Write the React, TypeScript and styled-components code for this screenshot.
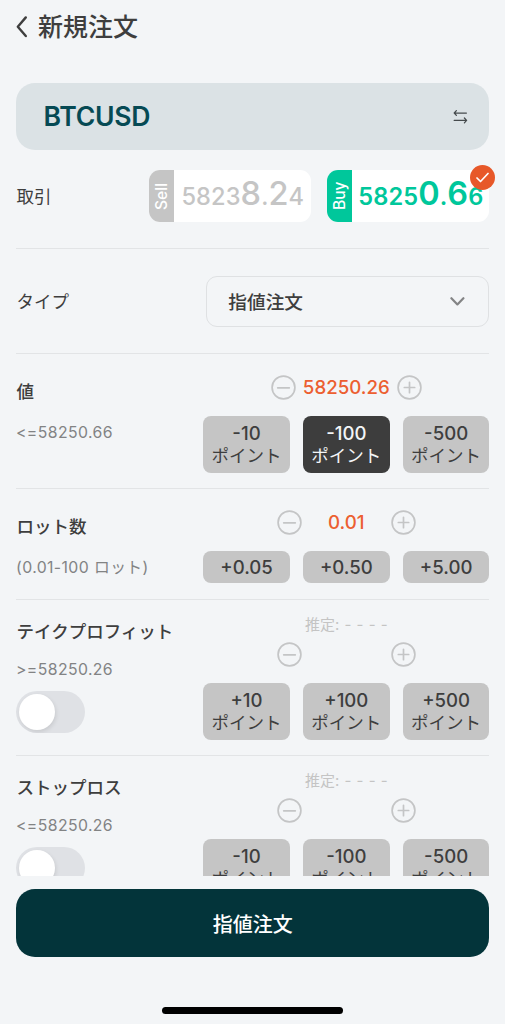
import React from "react";
import styled, { createGlobalStyle } from "styled-components";

const GlobalStyle = createGlobalStyle`
  * { box-sizing: border-box; }
  body {
    margin: 0;
    background: #f3f5f7;
    color: #3e3e3e;
    font-family: Inter, "Noto Sans CJK JP", sans-serif;
    font-weight: 500;
  }
  button { font: inherit; color: inherit; border: 0; padding: 0; background: none; }
`;

const Screen = styled.main`
  width: 505px;
  height: 1024px;
  padding: 0 15.7px 0 16px;
  display: flex;
  flex-direction: column;
  overflow: hidden;
`;

const Header = styled.header`
  height: 83px;
  flex: none;
  display: flex;
  align-items: flex-start;
  padding-top: 12px;
`;

const BackButton = styled.button`
  width: 22px;
  height: 29px;
  display: flex;
  align-items: center;
`;

const Title = styled.h1`
  margin: 0;
  font-size: 25px;
  line-height: 31px;
  font-weight: 500;
`;

const SymbolBar = styled.div`
  height: 67px;
  flex: none;
  display: flex;
  align-items: center;
  justify-content: space-between;
  padding: 0 21px 0 27.5px;
  border-radius: 19px;
  background: #dbe2e5;
`;

const SymbolName = styled.span`
  color: #064a54;
  font-size: 26.6px;
  line-height: 32px;
  padding-bottom: 1px;
  font-weight: 600;
  letter-spacing: -0.3px;
`;

const ScrollArea = styled.div`
  height: 726px;
  flex: none;
  overflow: hidden;
  margin-right: -8px;
  padding-right: 8px;
`;

const Row = styled.section<{ $height: number; $top: number }>`
  height: ${(p) => p.$height}px;
  padding-top: ${(p) => p.$top}px;
  display: flex;
  justify-content: space-between;
  align-items: flex-start;
  border-bottom: 1px solid #e2e4e6;
`;

const Label = styled.span<{ $line?: number; $light?: boolean }>`
  display: block;
  padding-left: 0.5px;
  font-size: 17.5px;
  font-weight: ${(p) => (p.$light ? 400 : 500)};
  line-height: ${(p) => p.$line ?? 24}px;
  white-space: nowrap;
`;

const Hint = styled.span<{ $gap: number }>`
  display: block;
  margin-top: ${(p) => p.$gap}px;
  font-size: 15.8px;
  line-height: 22px;
  font-weight: 400;
  color: #828384;
  letter-spacing: 0.4px;
  white-space: nowrap;
`;

const Quotes = styled.div`
  display: flex;
  gap: 16px;
`;

const QuoteCard = styled.button<{ $color: string }>`
  position: relative;
  width: 162px;
  height: 52px;
  display: flex;
  border-radius: 11px;
  background: #fff;
  color: ${(p) => p.$color};
`;

const Side = styled.span<{ $color: string }>`
  width: 25px;
  height: 52px;
  display: flex;
  align-items: center;
  justify-content: center;
  border-radius: 0 11px 11px 0;
  background: ${(p) => p.$color};
  color: #fff;
  font-size: 15.6px;
  line-height: 23px;
  writing-mode: vertical-rl;
  transform: rotate(180deg);
`;

const Quote = styled.span<{ $weight: number }>`
  flex: 1;
  height: 52px;
  line-height: 47px;
  text-align: center;
  font-size: 23.6px;
  font-weight: ${(p) => p.$weight};
  letter-spacing: 0.1px;
  white-space: nowrap;
`;

const Big = styled.span`
  font-size: 32.5px;
`;

const Badge = styled.span`
  position: absolute;
  top: -5px;
  right: -6px;
  width: 25px;
  height: 25px;
  display: flex;
  align-items: center;
  justify-content: center;
  border-radius: 50%;
  background: #e75829;
`;

const Select = styled.button`
  width: 283px;
  height: 51px;
  display: flex;
  align-items: center;
  justify-content: space-between;
  padding: 0 23px 2px 21px;
  border: 1px solid #dfe1e3;
  border-radius: 11px;
  font-size: 18.7px;
`;

const Controls = styled.div`
  width: 286px;
  display: flex;
  flex-direction: column;
  align-items: center;
`;

const Estimate = styled.span`
  height: 20px;
  margin-bottom: 7px;
  font-size: 15px;
  line-height: 20px;
  font-weight: 400;
  color: #c4c4c4;
  word-spacing: 1px;
  white-space: nowrap;
`;

const Stepper = styled.div<{ $width: number }>`
  width: ${(p) => p.$width}px;
  height: 25px;
  display: flex;
  align-items: center;
  justify-content: space-between;
  margin-bottom: 16px;
`;

const StepButton = styled.button`
  width: 25px;
  height: 25px;
  display: flex;
`;

const Value = styled.span`
  color: #ec5f31;
  font-size: 18.7px;
  line-height: 25px;
`;

const Chips = styled.div`
  width: 100%;
  display: grid;
  grid-template-columns: repeat(3, 1fr);
  gap: 13.4px;
`;

const Chip = styled.button<{ $active?: boolean; $tall?: boolean }>`
  height: ${(p) => (p.$tall ? 57 : 32)}px;
  display: flex;
  flex-direction: column;
  align-items: center;
  justify-content: center;
  border-radius: 8px;
  background: ${(p) => (p.$active ? "#3d3d3d" : "#c5c5c5")};
  color: ${(p) => (p.$active ? "#f3f5f7" : "#3e3e3e")};
  font-size: 18.6px;
  line-height: 22px;
  white-space: nowrap;
`;

const ChipUnit = styled.span`
  font-size: 17.5px;
  line-height: 23px;
  font-weight: 400;
`;

const Toggle = styled.button`
  width: 69px;
  height: 42px;
  display: flex;
  align-items: center;
  margin-top: 10px;
  padding-left: 3px;
  border-radius: 21px;
  background: #dfe1e5;
  overflow: hidden;
`;

const Knob = styled.span`
  width: 36px;
  height: 36px;
  border-radius: 50%;
  background: #fff;
  box-shadow: 1px 2px 4px rgba(0, 0, 0, 0.1);
`;

const Submit = styled.button`
  height: 68px;
  flex: none;
  margin-top: 13px;
  border-radius: 19px;
  background: #03343a;
  color: #fff;
  font-size: 20px;
`;

const HomeIndicator = styled.div`
  width: 181px;
  height: 7px;
  flex: none;
  margin: 49.5px auto 0;
  border-radius: 4px;
  background: #000;
`;

function StepIcon({ plus }: { plus?: boolean }) {
  return (
    <svg width="25" height="25" viewBox="0 0 25 25" fill="none" stroke="#c4c5c6" strokeWidth="1.7" strokeLinecap="round">
      <circle cx="12.5" cy="12.5" r="11.4" />
      <path d={plus ? "M7.3 12.5h10.4M12.5 7.3v10.4" : "M6.7 12.8h11.6"} />
    </svg>
  );
}

function StepControl({ value, width }: { value?: string; width: number }) {
  return (
    <Stepper $width={width}>
      <StepButton aria-label="minus"><StepIcon /></StepButton>
      {value && <Value>{value}</Value>}
      <StepButton aria-label="plus"><StepIcon plus /></StepButton>
    </Stepper>
  );
}

function PointChips({ values, active }: { values: string[]; active?: string }) {
  return (
    <Chips>
      {values.map((v) => (
        <Chip key={v} $tall $active={v === active}>
          <span>{v}</span>
          <ChipUnit>ポイント</ChipUnit>
        </Chip>
      ))}
    </Chips>
  );
}

function ExitRow({ label, hint, values }: { label: string; hint: string; values: string[] }) {
  return (
    <Row $height={156.3} $top={15.4}>
      <div>
        <Label $line={34}>{label}</Label>
        <Hint $gap={10}>{hint}</Hint>
        <Toggle role="switch" aria-checked={false}><Knob /></Toggle>
      </div>
      <Controls>
        <Estimate>推定: - - - -</Estimate>
        <StepControl width={139.5} />
        <PointChips values={values} />
      </Controls>
    </Row>
  );
}

export default function App() {
  return (
    <>
      <GlobalStyle />
      <Screen>
        <Header>
          <BackButton aria-label="back">
            <svg width="12" height="24" viewBox="0 0 12 24" fill="none" stroke="#3e3e3e" strokeWidth="2.4" strokeLinecap="round" strokeLinejoin="round">
              <path d="M9.8 2.4L1.8 11.7l8 9.3" />
            </svg>
          </BackButton>
          <Title>新規注文</Title>
        </Header>
        <SymbolBar>
          <SymbolName>BTCUSD</SymbolName>
          <svg width="15" height="16" viewBox="0 0 15 16" fill="none" stroke="#454a4c" strokeWidth="1.25" strokeLinecap="round" strokeLinejoin="round">
            <path d="M13.4 4H1.2M3.4 1.6L1.2 4l2.2 2.4M1.2 11.4h12.4M11.4 9l2.2 2.4-2.2 2.4" />
          </svg>
        </SymbolBar>
        <ScrollArea>
          <Row $height={98.5} $top={20}>
            <Label $line={54} $light>取引</Label>
            <Quotes>
              <QuoteCard $color="#c5c5c5">
                <Side $color="#c5c5c5">Sell</Side>
                <Quote $weight={500}>5823<Big>8</Big>.<Big>2</Big>4</Quote>
              </QuoteCard>
              <QuoteCard $color="#00c79b">
                <Side $color="#00c79b">Buy</Side>
                <Quote $weight={600}>5825<Big>0</Big>.<Big>6</Big>6</Quote>
                <Badge>
                  <svg width="13" height="11" viewBox="0 0 13 11" fill="none" stroke="#fff" strokeWidth="1.7" strokeLinecap="round" strokeLinejoin="round">
                    <path d="M1 6l3.5 3.5L12 1.5" />
                  </svg>
                </Badge>
              </QuoteCard>
            </Quotes>
          </Row>
          <Row $height={105} $top={27.5}>
            <Label $line={51} $light>タイプ</Label>
            <Select>
              指値注文
              <svg width="15" height="10" viewBox="0 0 15 10" fill="none" stroke="#838485" strokeWidth="2.2" strokeLinecap="round" strokeLinejoin="round">
                <path d="M1.4 2.2l6 6.2 6-6.2" />
              </svg>
            </Select>
          </Row>
          <Row $height={135} $top={21.5}>
            <div>
              <Label $line={34}>値</Label>
              <Hint $gap={13}>&lt;=58250.66</Hint>
            </div>
            <Controls>
              <StepControl value="58250.26" width={151.5} />
              <PointChips values={["-10", "-100", "-500"]} active="-100" />
            </Controls>
          </Row>
          <Row $height={111} $top={21.5}>
            <div>
              <Label $line={34}>ロット数</Label>
              <Hint $gap={13}>(0.01-100 ロット)</Hint>
            </div>
            <Controls>
              <StepControl value="0.01" width={139.5} />
              <Chips>
                {["+0.05", "+0.50", "+5.00"].map((v) => (
                  <Chip key={v}>{v}</Chip>
                ))}
              </Chips>
            </Controls>
          </Row>
          <ExitRow label="テイクプロフィット" hint=">=58250.26" values={["+10", "+100", "+500"]} />
          <ExitRow label="ストップロス" hint="<=58250.26" values={["-10", "-100", "-500"]} />
        </ScrollArea>
        <Submit>指値注文</Submit>
        <HomeIndicator />
      </Screen>
    </>
  );
}
